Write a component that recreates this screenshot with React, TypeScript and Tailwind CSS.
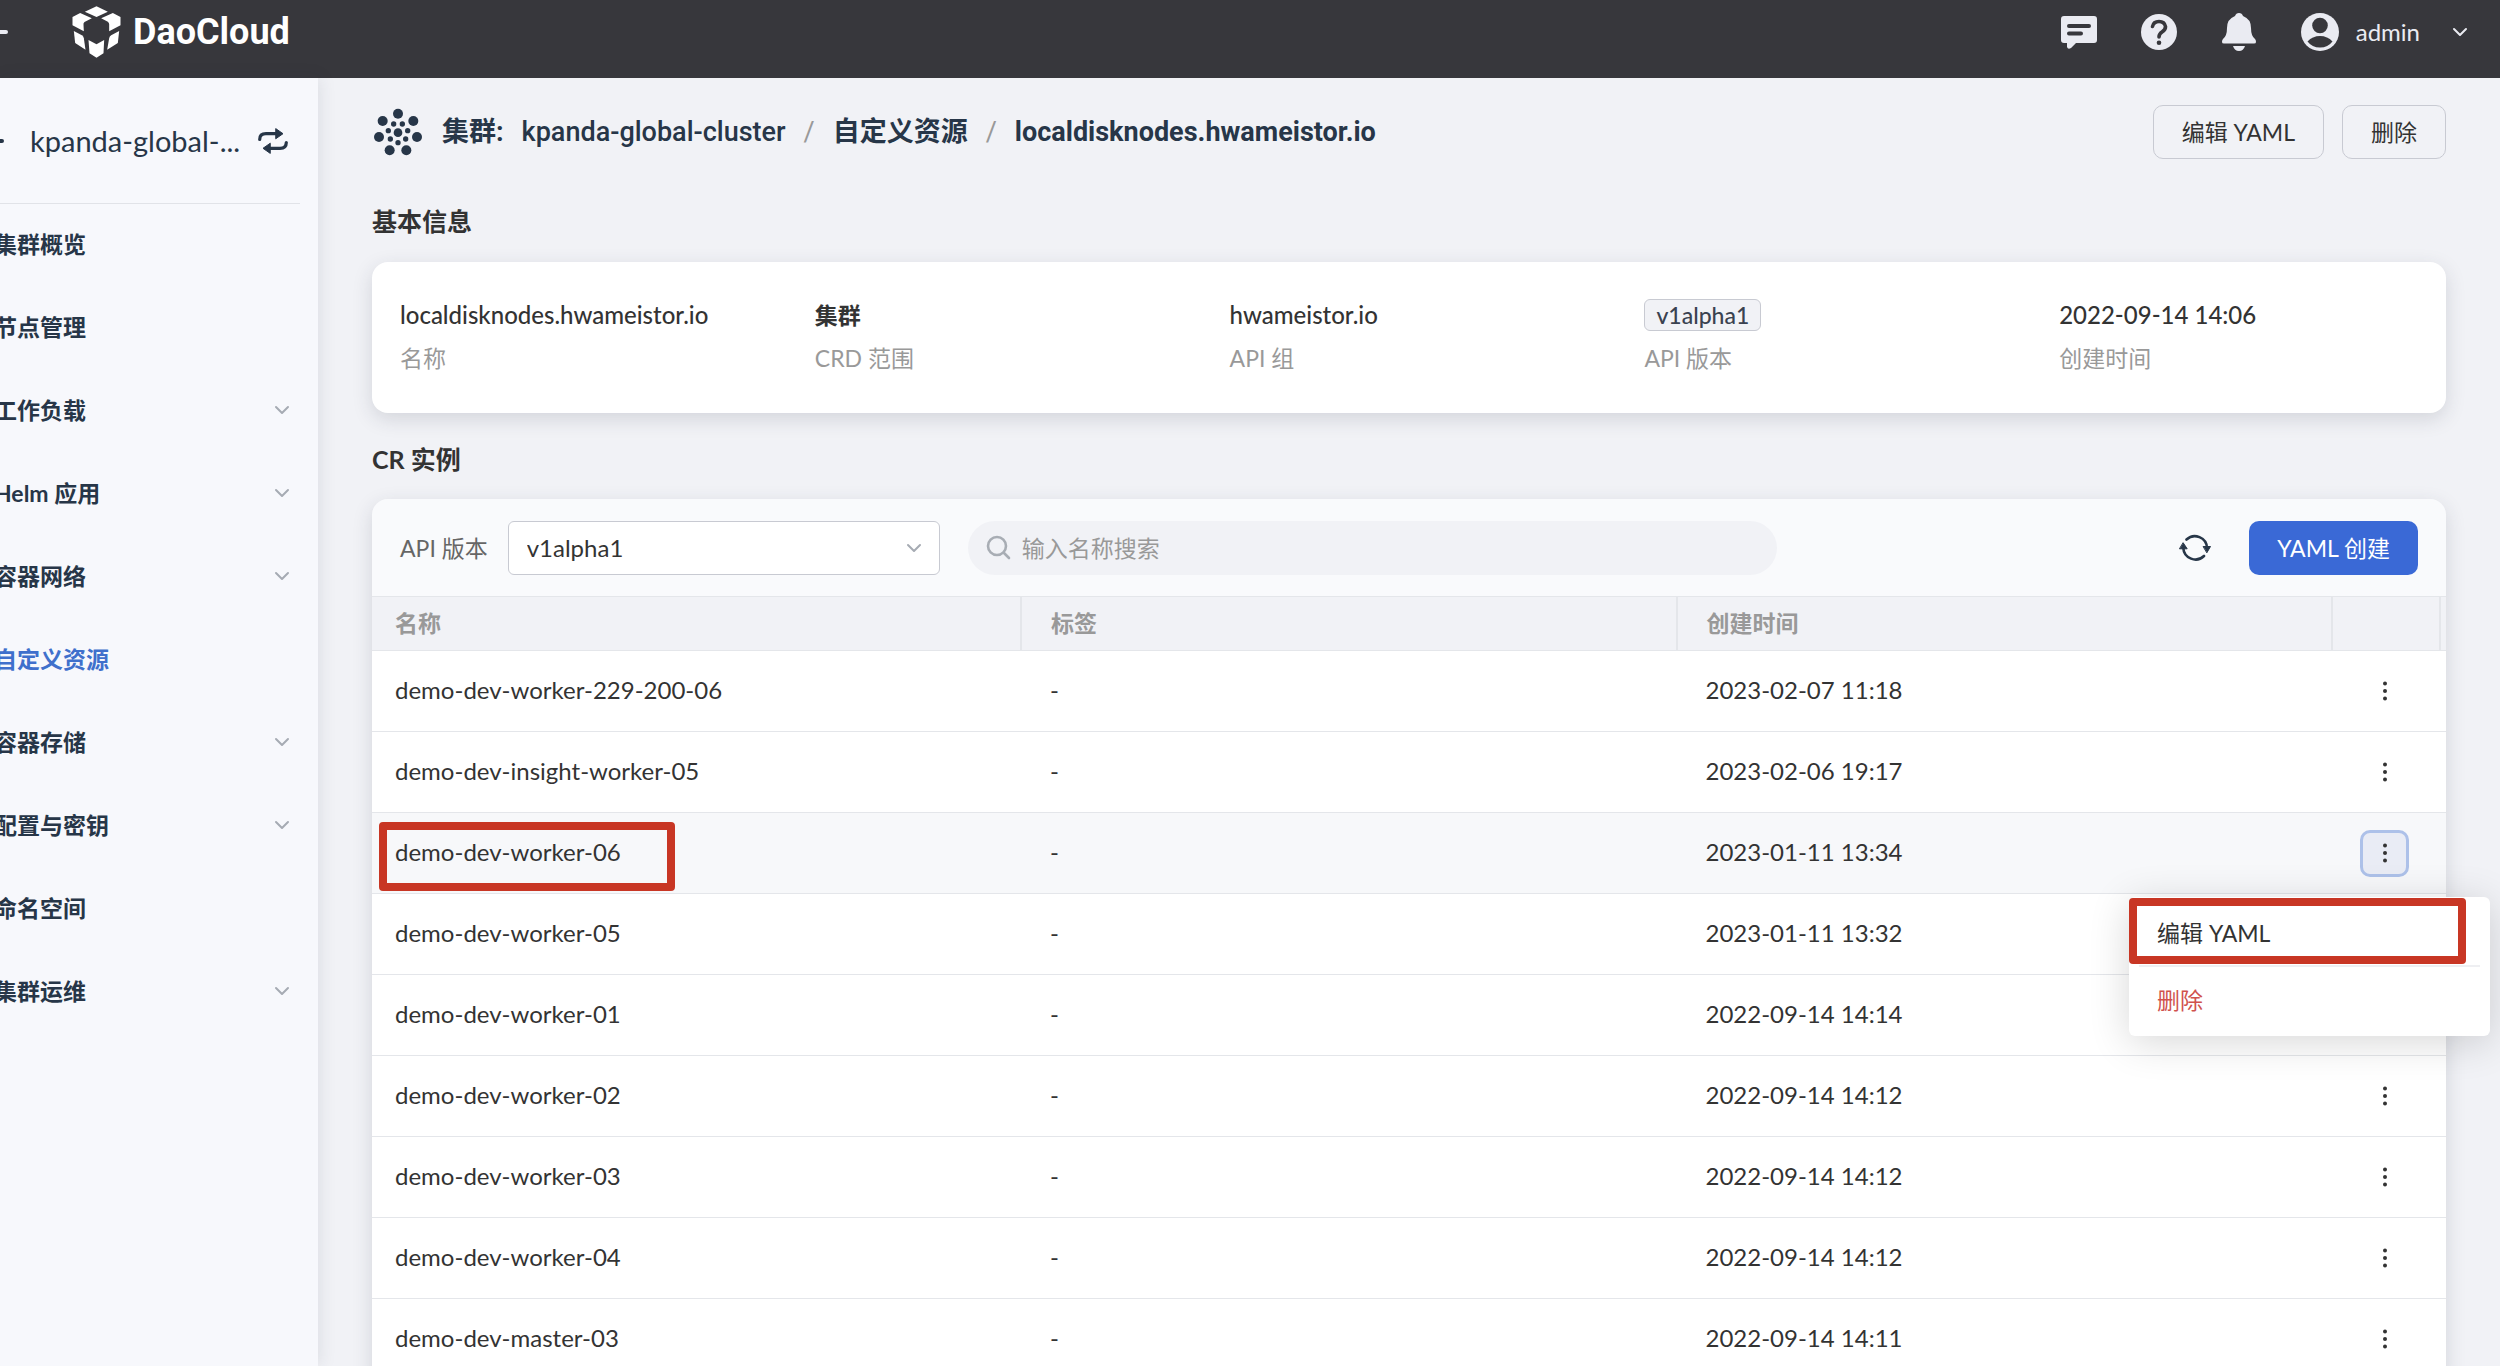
import React from 'react';
import { ChevronDown } from 'lucide-react';

interface NavItem {
  label: string;
  expandable?: boolean;
  active?: boolean;
}

const navItems: NavItem[] = [
  { label: '集群概览' },
  { label: '节点管理' },
  { label: '工作负载', expandable: true },
  { label: 'Helm 应用', expandable: true },
  { label: '容器网络', expandable: true },
  { label: '自定义资源', active: true },
  { label: '容器存储', expandable: true },
  { label: '配置与密钥', expandable: true },
  { label: '命名空间' },
  { label: '集群运维', expandable: true },
];

interface Instance {
  name: string;
  createdAt: string;
}

const instances: Instance[] = [
  { name: 'demo-dev-worker-229-200-06', createdAt: '2023-02-07 11:18' },
  { name: 'demo-dev-insight-worker-05', createdAt: '2023-02-06 19:17' },
  { name: 'demo-dev-worker-06', createdAt: '2023-01-11 13:34' },
  { name: 'demo-dev-worker-05', createdAt: '2023-01-11 13:32' },
  { name: 'demo-dev-worker-01', createdAt: '2022-09-14 14:14' },
  { name: 'demo-dev-worker-02', createdAt: '2022-09-14 14:12' },
  { name: 'demo-dev-worker-03', createdAt: '2022-09-14 14:12' },
  { name: 'demo-dev-worker-04', createdAt: '2022-09-14 14:12' },
  { name: 'demo-dev-master-03', createdAt: '2022-09-14 14:11' },
];

const selectedName = 'demo-dev-worker-06';

const LogoIcon = () => (
  <svg viewBox="216 20 146 156" className="h-[52px] w-[49px]" fill="#fff" aria-hidden="true">
    <path d="M289 21l34 16-34 16-35-16z" />
    <path d="M217 53l23-12 35 16-22 11q-4 3-3 8l1 20-34-18z" />
    <path d="M361 53l-23-12-35 16 20 10q4 3 4 8v21l34-18z" />
    <path d="M221 95l24 13q5 3 6 9l5 34-31-20z" />
    <path d="M357 95l-24 13q-5 3-6 9l-6 34 32-20z" />
    <path d="M265 122l24 13 23-13-2 40-21 13-21-13z" />
  </svg>
);

const ClusterIcon = () => (
  <svg viewBox="1125 325 144 144" className="size-12" fill="#273648" aria-hidden="true">
    <circle cx="1197" cy="342" r="15" />
    <circle cx="1151" cy="364" r="15" />
    <circle cx="1243" cy="364" r="15" />
    <circle cx="1140" cy="412" r="15" />
    <circle cx="1254" cy="412" r="15" />
    <circle cx="1172" cy="452" r="15" />
    <circle cx="1222" cy="452" r="15" />
    <circle cx="1197" cy="399" r="13" />
    <circle cx="1184" cy="373" r="8" />
    <circle cx="1210" cy="373" r="8" />
    <circle cx="1168" cy="393" r="8" />
    <circle cx="1226" cy="393" r="8" />
    <circle cx="1174" cy="418" r="8" />
    <circle cx="1220" cy="418" r="8" />
    <circle cx="1197" cy="429" r="8" />
  </svg>
);

const MessageIcon = () => (
  <svg viewBox="0 0 36 36" className="size-9" aria-hidden="true">
    <path d="M3 2h30q3 0 3 3v21q0 3-3 3H15l-5 5q-3 2-4-1l0-4H3q-3 0-3-3V5q0-3 3-3z" fill="#eaebf2" />
    <path d="M8 12h20M8 19.500h12" stroke="#37373c" strokeWidth="4" strokeLinecap="round" />
  </svg>
);

const HelpIcon = () => (
  <svg viewBox="0 0 36 36" className="size-9" aria-hidden="true">
    <circle cx="18" cy="18" r="18" fill="#eaebf2" />
    <path d="M11.500 12.500q1-5 6.500-5t6.500 5q.2 3-3.500 5.500-3 2-3 5" fill="none" stroke="#37373c" strokeWidth="3.600" strokeLinecap="round" />
    <circle cx="18" cy="28.700" r="2.300" fill="#37373c" />
  </svg>
);

const BellIcon = () => (
  <svg viewBox="0 0 36 38" className="h-[38px] w-9" fill="#eaebf2" aria-hidden="true">
    <path d="M18 0q3 0 4 3 8 3 8 12 0 8 4 11 1 1 1 3 0 1.500-2 1.500H3q-2 0-2-1.500 0-2 1-3 4-3 4-11 0-9 8-12 1-3 4-3z" />
    <path d="M12 33h12q-1.500 5-6 5t-6-5z" />
  </svg>
);

const UserIcon = () => (
  <svg viewBox="0 0 38 38" className="size-[38px]" aria-hidden="true">
    <circle cx="19" cy="19" r="19" fill="#eaebf2" />
    <circle cx="19" cy="12.500" r="7.800" fill="#37373c" />
    <path d="M6.500 28.500q5-5.500 12.500-5.500t12.500 5.500Q27 34.500 19 34.500T6.500 28.500z" fill="#37373c" />
  </svg>
);

const SwapIcon = () => (
  <svg viewBox="0 0 30 26" className="h-[26px] w-[30px]" fill="none" stroke="#273648" strokeWidth="3.200" strokeLinecap="round" aria-hidden="true">
    <path d="M1.700 11.500Q1.700 5.700 8 5.700h11" />
    <path d="M28.300 14.500q0 5.800-6.300 5.800H11" />
    <path d="M18 .8l7 4.900-7 4.900zM12 15.400l-7 4.900 7 4.900z" fill="#273648" strokeWidth="1" strokeLinejoin="round" />
  </svg>
);

const RefreshIcon = () => (
  <svg viewBox="0 0 32 28" className="h-7 w-8" fill="none" stroke="#273648" strokeWidth="2.600" strokeLinecap="round" aria-hidden="true">
    <path d="M7.500 5.500A12.200 12.200 0 0 1 28 14" />
    <path d="M25 22A12.200 12.200 0 0 1 4.300 14" />
    <path d="M24.500 12.500h7L28 18.500zM.8 14.800h7.400L4.300 9z" fill="#273648" strokeWidth="1" strokeLinejoin="round" />
  </svg>
);

const SearchIcon = () => (
  <svg viewBox="0 0 26 26" className="size-[26px]" fill="none" stroke="#a8adb4" strokeWidth="2.600" strokeLinecap="round" aria-hidden="true">
    <circle cx="11" cy="11" r="9" />
    <path d="M18 18l5 5" />
  </svg>
);

const DotsIcon = () => (
  <svg viewBox="0 0 4 20" className="h-5 w-1" fill="#333" aria-hidden="true">
    <circle cx="2" cy="2.500" r="2" />
    <circle cx="2" cy="10" r="2" />
    <circle cx="2" cy="17.500" r="2" />
  </svg>
);

const TopBar = () => (
  <header className="flex h-[78px] shrink-0 items-center bg-[#37373c] pr-7 pb-[14px]">
    <span className="h-1 w-2 rounded-r-sm bg-[#eaebf2]" />
    <a href="#" className="ml-16 flex items-center gap-3 font-['Roboto',sans-serif] text-[36px] leading-10 font-bold text-white">
      <LogoIcon />
      DaoCloud
    </a>
    <div className="ml-auto flex items-center gap-11">
      <button aria-label="消息"><MessageIcon /></button>
      <button aria-label="帮助"><HelpIcon /></button>
      <button aria-label="通知"><BellIcon /></button>
      <button className="flex items-center text-[#eaebf2]">
        <UserIcon />
        <span className="mr-7 ml-[17px] text-2xl">admin</span>
        <ChevronDown className="size-6" strokeWidth={2} />
      </button>
    </div>
  </header>
);

const Sidebar = () => (
  <aside className="z-10 w-[318px] shrink-0 bg-[#f7f8fc] text-[#273648] shadow-[2px_0_16px_rgba(40,50,70,0.10)]">
    <div className="mr-[18px] flex h-[126px] items-center border-b border-[#e1e3e8]">
      <span className="h-1 w-1 rounded-r-full bg-[#273648]" />
      <span className="ml-[26px] text-[29px]">kpanda-global-...</span>
      <button className="mr-3 ml-auto" aria-label="切换集群"><SwapIcon /></button>
    </div>
    <nav className="-ml-[6px]">
      {navItems.map((item) => (
        <a
          key={item.label}
          href="#"
          className={`flex h-[83px] items-center justify-between pr-6 pb-1 font-bold ${
            item.active ? 'text-[#3f70cc]' : ''
          }`}
        >
          {item.label}
          {item.expandable && <ChevronDown className="size-6 text-[#a6abb3]" strokeWidth={2} />}
        </a>
      ))}
    </nav>
  </aside>
);

const Breadcrumb = () => (
  <div className="flex items-center justify-between">
    <div className="flex items-center font-['Roboto','Noto_Sans_CJK_SC',sans-serif] text-[27px] font-medium text-[#273648]">
      <span className="ml-[2px]"><ClusterIcon /></span>
      <span className="ml-5 font-bold">集群:</span>
      <a href="#" className="ml-[18px]">kpanda-global-cluster</a>
      <span className="mx-[18px] font-normal text-[#999]">/</span>
      <a href="#" className="font-bold">自定义资源</a>
      <span className="mx-[18px] font-normal text-[#999]">/</span>
      <span className="font-bold">localdisknodes.hwameistor.io</span>
    </div>
    <div className="flex gap-[18px]">
      <button className="h-[54px] rounded-[10px] border border-[#c8cad2] px-7">编辑 YAML</button>
      <button className="h-[54px] rounded-[10px] border border-[#c8cad2] px-7">删除</button>
    </div>
  </div>
);

interface InfoItemProps {
  label: string;
  children: React.ReactNode;
}

const InfoItem: React.FC<InfoItemProps> = ({ label, children }) => (
  <div className="flex flex-col gap-[9px] px-7">
    <dd className="flex h-[34px] items-center text-2xl font-medium">{children}</dd>
    <dt className="leading-[34px] text-[#999]">{label}</dt>
  </div>
);

const BasicInfo = () => (
  <dl className="mt-6 grid grid-cols-5 rounded-2xl bg-white pt-9 pb-[38px] shadow-[0_6px_20px_rgba(40,50,70,0.15)]">
    <InfoItem label="名称">localdisknodes.hwameistor.io</InfoItem>
    <InfoItem label="CRD 范围"><span className="text-[23px] font-bold">集群</span></InfoItem>
    <InfoItem label="API 组">hwameistor.io</InfoItem>
    <InfoItem label="API 版本">
      <span className="rounded-md border border-[#c8cad2] bg-[#f1f2f6] px-[11px] text-[23px] leading-[30px] text-[#3a4250]">v1alpha1</span>
    </InfoItem>
    <InfoItem label="创建时间">2022-09-14 14:06</InfoItem>
  </dl>
);

const Toolbar = () => (
  <div className="flex h-[97px] items-center rounded-t-2xl bg-[#f9fafc] px-7">
    <label htmlFor="api-version" className="text-[#666]">API 版本</label>
    <div className="relative ml-5 w-[432px]">
      <select id="api-version" className="h-[54px] w-full appearance-none rounded-md border border-[#c8cad2] bg-white px-[18px] text-2xl">
        <option>v1alpha1</option>
      </select>
      <ChevronDown className="pointer-events-none absolute top-[15px] right-[14px] size-6 text-[#a6abb3]" strokeWidth={2} />
    </div>
    <label className="ml-7 flex h-[54px] w-[809px] items-center gap-[10px] rounded-full bg-[#f1f2f6] px-[18px]">
      <SearchIcon />
      <input type="text" aria-label="搜索" placeholder="输入名称搜索" className="grow bg-transparent outline-none placeholder:text-[#999]" />
    </label>
    <button className="mr-[38px] ml-auto" aria-label="刷新"><RefreshIcon /></button>
    <button className="h-[54px] rounded-[10px] bg-[#3a69d6] px-7 text-white">YAML 创建</button>
  </div>
);

const RowMenu = () => (
  <div className="w-[361px] rounded-md bg-white pt-1 pb-1 text-left shadow-[0_6px_40px_rgba(0,0,0,0.16)]">
    <button className="block h-16 w-full px-7 text-left">编辑 YAML</button>
    <hr className="mx-[10px] border-t-2 border-[#eeeff2]" />
    <button className="block h-[65px] w-full px-7 text-left text-[#d0524d]">删除</button>
    <span className="pointer-events-none absolute top-px left-0 h-[66px] w-[337px] rounded-[4px] border-8 border-[#c83624]" />
  </div>
);

interface InstanceRowProps {
  instance: Instance;
  selected: boolean;
}

const InstanceRow: React.FC<InstanceRowProps> = ({ instance, selected }) => (
  <tr className={`h-[81px] border-b border-[#e4e6ea] ${selected ? 'bg-[#f7f8fa]' : 'bg-white'}`}>
    <td className="relative pb-[2px] pl-[23px]">
      {instance.name}
      {selected && (
        <span className="pointer-events-none absolute top-[9px] left-[7px] h-[69px] w-[296px] rounded-[4px] border-8 border-[#c83624]" />
      )}
    </td>
    <td className="pb-[2px] pl-[29px]">-</td>
    <td className="pb-[2px] pl-[29px]">{instance.createdAt}</td>
    <td className="relative pr-[3px]">
      <button
        aria-label="更多操作"
        className={`mx-auto flex h-[47px] w-[49px] items-center justify-center rounded-[10px] ${
          selected ? 'border-[3px] border-[#adc1e9] bg-[#e9ecf5]' : ''
        }`}
      >
        <DotsIcon />
      </button>
      {selected && (
        <div className="absolute top-[84px] right-[-50px] z-20 text-[23px]">
          <RowMenu />
        </div>
      )}
    </td>
    <td />
  </tr>
);

const InstanceTable = () => (
  <table className="w-full table-fixed border-collapse text-left text-2xl leading-[34px]">
    <thead>
      <tr className="h-[54px] border-y border-[#e4e6ea] bg-[#f1f2f6] text-[23px] text-[#999]">
        <th className="w-[649px] border-r-2 border-[#e4e6ea] pb-[2px] pl-[23px] font-bold">名称</th>
        <th className="border-r-2 border-[#e4e6ea] pb-[2px] pl-[29px] font-bold">标签</th>
        <th className="border-r-2 border-[#e4e6ea] pb-[2px] pl-[29px] font-bold">创建时间</th>
        <th className="w-[108px] border-r-2 border-[#e4e6ea]" />
        <th className="w-[6px]" />
      </tr>
    </thead>
    <tbody>
      {instances.map((instance) => (
        <InstanceRow key={instance.name} instance={instance} selected={instance.name === selectedName} />
      ))}
    </tbody>
  </table>
);

export default function App() {
  return (
    <div className="flex h-screen flex-col overflow-hidden bg-[#f1f2f6] font-['Lato','Noto_Sans_CJK_SC',sans-serif] text-[23px] leading-[34px] text-[#333]">
      <TopBar />
      <div className="flex min-h-0 grow">
        <Sidebar />
        <main className="min-w-0 grow px-[54px] pt-[27px]">
          <Breadcrumb />
          <h2 className="mt-[45px] text-[25px] font-bold">基本信息</h2>
          <BasicInfo />
          <h2 className="mt-[29px] text-[25px] font-bold">CR 实例</h2>
          <section className="mt-[23px] rounded-t-2xl shadow-[0_6px_20px_rgba(40,50,70,0.15)]">
            <Toolbar />
            <InstanceTable />
          </section>
        </main>
      </div>
    </div>
  );
}
